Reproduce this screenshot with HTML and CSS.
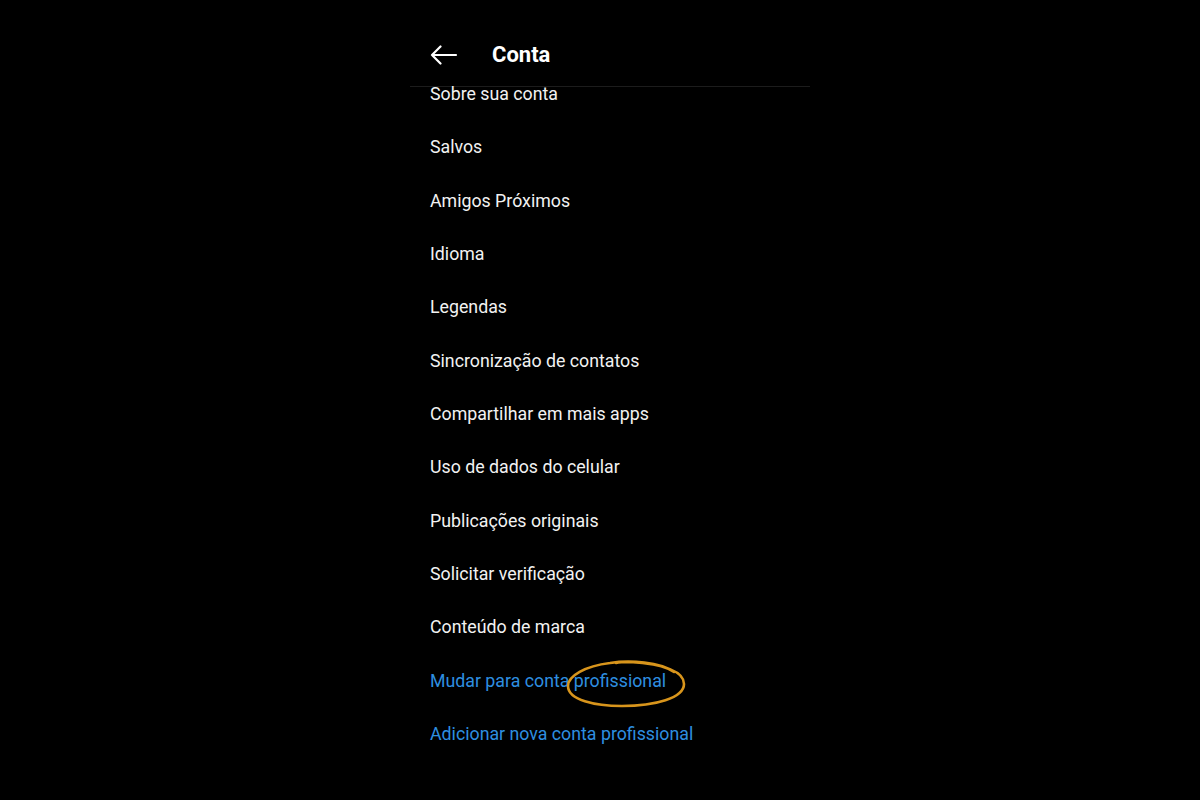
FILE: index.html
```html
<!DOCTYPE html>
<html lang="pt-BR">
<head>
<meta charset="utf-8">
<title>Conta</title>
<link rel="stylesheet" href="styles.css">
</head>
<body>
<div class="screen">
  <header class="topbar">
    <svg class="back" width="28" height="20" viewBox="0 0 28 20"><path d="M26 10H2M10.5 1.5L2 10l8.5 8.5" fill="none" stroke="#fff" stroke-width="2.2" stroke-linecap="round" stroke-linejoin="round"/></svg>
    <h1 class="title">Conta</h1>
  </header>
  <ul class="menu">
    <li>Sobre sua conta</li>
    <li>Salvos</li>
    <li>Amigos Próximos</li>
    <li>Idioma</li>
    <li>Legendas</li>
    <li>Sincronização de contatos</li>
    <li>Compartilhar em mais apps</li>
    <li>Uso de dados do celular</li>
    <li>Publicações originais</li>
    <li>Solicitar verificação</li>
    <li>Conteúdo de marca</li>
    <li class="link"><span class="mark-wrap">Mudar para conta profissional<svg class="circle" width="130" height="56" viewBox="0 0 130 56"><path d="M114 16C100 6 70 4 50 7 25 10 8 20 8 30 8 44 35 50 62 50 95 50 124 42 124 28 124 14 100 8 70 6 64 6 60 6 56 7" fill="none" stroke="#d8951c" stroke-width="2.6" stroke-linecap="round"/></svg></span></li>
    <li class="link">Adicionar nova conta profissional</li>
  </ul>
</div>
</body>
</html>
```
FILE: styles.css
```css
html, body {
  margin: 0;
  padding: 0;
  background: #000;
}
body {
  width: 1200px;
  height: 800px;
  overflow: hidden;
  font-family: Roboto, "Liberation Sans", sans-serif;
  color: #f2f2f2;
}
.screen {
  width: 400px;
  margin-left: 410px;
}
.topbar {
  display: flex;
  align-items: center;
  height: 24px;
  padding: 43px 0 19px 20px;
  border-bottom: 1px solid #1c1c1c;
}
.back {
  display: block;
  width: 28px;
  height: 20px;
  margin-right: 34px;
}
.title {
  margin: 0;
  font-size: 22px;
  font-weight: 700;
  line-height: 24px;
  color: #fff;
}
.menu {
  list-style: none;
  margin: 0;
  padding: 0 0 0 20px;
  display: flex;
  flex-direction: column;
  gap: 39.33px;
}
.menu li {
  font-size: 17.75px;
  line-height: 14px;
  height: 14px;
  white-space: nowrap;
}
.menu li.link {
  color: #2e8fe0;
}
.mark-wrap {
  position: relative;
  display: inline-block;
}
.circle {
  position: absolute;
  left: 130px;
  top: -18px;
  pointer-events: none;
}
```
